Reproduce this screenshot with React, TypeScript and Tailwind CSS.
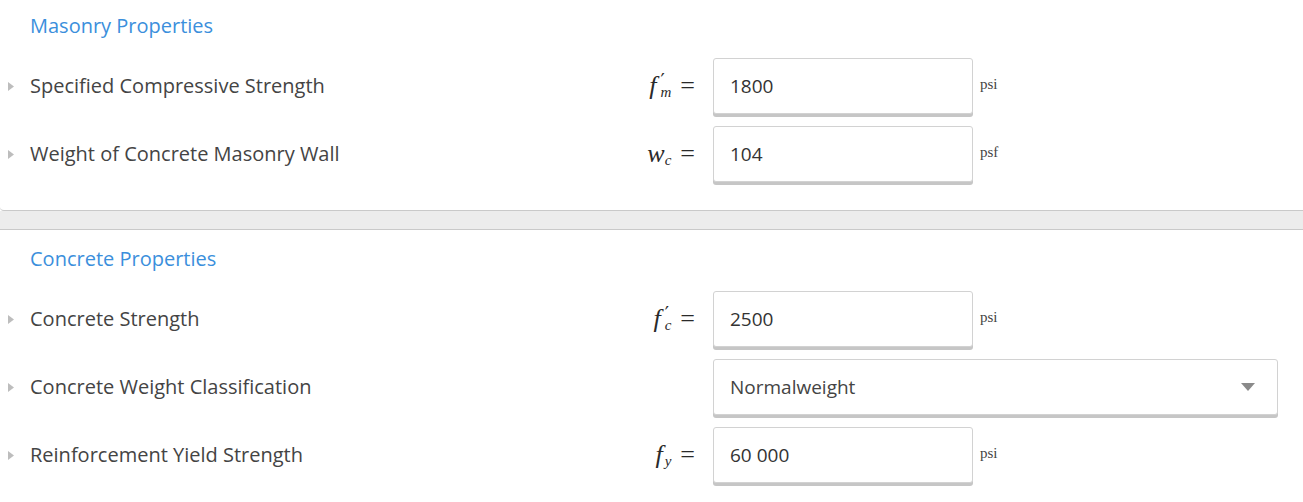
import React from "react";

const sans = { fontFamily: '"Open Sans", "Liberation Sans", sans-serif' };
const serif = { fontFamily: '"Liberation Serif", "DejaVu Serif", serif' };
const primeFont = { fontFamily: '"DejaVu Serif", "Liberation Serif", serif' };

function Tri() {
  return (
    <svg width="6" height="9" viewBox="0 0 6 9" className="ml-[8px] mr-[16px] shrink-0">
      <path d="M0 0 L6 4.5 L0 9 Z" fill="#bdbdbd" />
    </svg>
  );
}

function MathSym({ base, sub, prime }: { base: string; sub: string; prime?: boolean }) {
  const col = prime
    ? "inline-flex flex-col leading-none ml-[4px]"
    : base === "f"
    ? "inline-flex flex-col leading-none ml-[2px]"
    : "inline-flex flex-col leading-none ml-[0px]";
  return (
    <span className="inline-flex items-center text-[#2a2a2a] whitespace-nowrap" style={serif}>
      <span className="italic text-[26px] leading-none">{base}</span>
      <span className={col}>
        <span className="h-[12px] text-[19px] leading-[12px] pt-[1px]" style={primeFont}>
          {prime ? "′" : "\u00a0"}
        </span>
        <span className="italic text-[15px] leading-[14px]">{sub}</span>
      </span>
      <span className="ml-[9px] text-[26px] leading-none">=</span>
    </span>
  );
}

function Box({ value, unit }: { value: string; unit: string }) {
  return (
    <div className="flex items-start">
      <div className="w-[260px] h-[56px] border border-[#d2d2d2] rounded-[3px] bg-white shadow-[0_3px_0_0_#c6c6c6] flex items-center pl-[16px] text-[19px] text-[#333]" style={sans}>
        {value}
      </div>
      <span className="ml-[7px] mt-[15px] text-[15px] text-[#444]" style={serif}>
        {unit}
      </span>
    </div>
  );
}

function Row({ label, math, children }: { label: string; math?: React.ReactNode; children: React.ReactNode }) {
  return (
    <div className="h-[68px] flex items-center">
      <Tri />
      <div className="w-[570px] text-[20px] text-[#444]" style={sans}>
        {label}
      </div>
      <div className="w-[95px] flex justify-end">{math}</div>
      <div className="ml-[18px]">{children}</div>
    </div>
  );
}

function Title({ children }: { children: React.ReactNode }) {
  return (
    <div className="h-[28px] flex items-center pl-[30px] text-[20px] text-[#3b8fdc]" style={sans}>
      {children}
    </div>
  );
}

export default function App() {
  return (
    <div className="w-[1303px] h-[502px] bg-white overflow-hidden">
      <div className="pt-[12px] pb-[22px] border-b border-[#c9c9c9] rounded-bl-[4px]">
        <Title>Masonry Properties</Title>
        <div className="mt-[12px]">
          <Row label="Specified Compressive Strength" math={<MathSym base="f" sub="m" prime />}>
            <Box value="1800" unit="psi" />
          </Row>
          <Row label="Weight of Concrete Masonry Wall" math={<MathSym base="w" sub="c" />}>
            <Box value="104" unit="psf" />
          </Row>
        </div>
      </div>
      <div className="h-[18px] bg-[#ececec]" />
      <div className="border-t border-[#c9c9c9] pt-[15px]">
        <Title>Concrete Properties</Title>
        <div className="mt-[12px]">
          <Row label="Concrete Strength" math={<MathSym base="f" sub="c" prime />}>
            <Box value="2500" unit="psi" />
          </Row>
          <Row label="Concrete Weight Classification">
            <div className="w-[565px] h-[56px] border border-[#d2d2d2] rounded-[3px] bg-white shadow-[0_3px_0_0_#c6c6c6] flex items-center justify-between pl-[16px] pr-[22px] text-[19px] text-[#444]" style={sans}>
              <span>Normalweight</span>
              <svg width="14" height="8" viewBox="0 0 14 8">
                <path d="M0 0 L14 0 L7 8 Z" fill="#8a8a8a" />
              </svg>
            </div>
          </Row>
          <Row label="Reinforcement Yield Strength" math={<MathSym base="f" sub="y" />}>
            <Box value="60 000" unit="psi" />
          </Row>
        </div>
      </div>
    </div>
  );
}
